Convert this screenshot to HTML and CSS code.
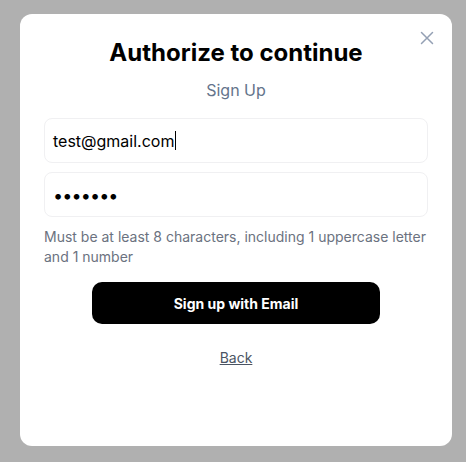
FILE: index.html
```html
<!DOCTYPE html>
<html lang="en">
<head>
<meta charset="utf-8">
<title>Authorize to continue</title>
<link rel="stylesheet" href="styles.css">
</head>
<body>
  <div class="modal">
    <button class="close" aria-label="Close">
      <svg width="16" height="16" viewBox="0 0 16 16" fill="none" stroke="#94a0b4" stroke-width="1.5" stroke-linecap="round">
        <path d="M2.5 2.5 L13.5 13.5 M13.5 2.5 L2.5 13.5"/>
      </svg>
    </button>
    <h1 class="title">Authorize to continue</h1>
    <p class="subtitle">Sign Up</p>
    <div class="fields">
      <div class="field"><span class="value">test@gmail.com</span><span class="caret"></span></div>
      <div class="field"><span class="dots">•••••••</span></div>
    </div>
    <p class="hint">Must be at least 8 characters, including 1 uppercase letter and 1 number</p>
    <button class="submit">Sign up with Email</button>
    <a class="back" href="#">Back</a>
  </div>
</body>
</html>
```
FILE: styles.css
```css
html, body {
  margin: 0;
  height: 100%;
}
body {
  background: #b0b0b0;
  font-family: Inter, "Noto Sans", sans-serif;
  padding: 14px 14px 16px 20px;
  box-sizing: border-box;
  display: flex;
}
.modal {
  position: relative;
  width: 432px;
  height: 432px;
  background: #fff;
  border-radius: 12px;
  padding: 24px 24px 0;
  box-sizing: border-box;
  display: flex;
  flex-direction: column;
}
.close {
  position: absolute;
  top: 16px;
  right: 17px;
  width: 16px;
  height: 16px;
  padding: 0;
  border: 0;
  background: none;
  display: flex;
}
.title {
  margin: 0;
  font-size: 24px;
  line-height: 30px;
  font-weight: 700;
  color: #000;
  text-align: center;
}
.subtitle {
  margin: 10px 0 0;
  font-size: 16px;
  line-height: 24px;
  color: #64748b;
  text-align: center;
}
.fields {
  margin-top: 16px;
  display: flex;
  flex-direction: column;
  gap: 9px;
}
.field {
  height: 45px;
  box-sizing: border-box;
  border: 1px solid #f0f0f2;
  border-radius: 8px;
  padding: 0 8px;
  display: flex;
  align-items: center;
  font-size: 16px;
  color: #000;
}
.caret {
  display: inline-block;
  width: 1px;
  height: 19px;
  background: #000;
  margin-left: 1px;
}
.dots {
  font-size: 18px;
  letter-spacing: -0.9px;
  margin-left: 0;
  position: relative;
  top: 1px;
}
.hint {
  margin: 10px 0 0;
  font-size: 14px;
  line-height: 20px;
  color: #6b7280;
}
.submit {
  margin: 15px auto 0;
  width: 288px;
  height: 42px;
  border: 0;
  border-radius: 10px;
  background: #000;
  color: #fff;
  font-family: Inter, "Noto Sans", sans-serif;
  font-size: 14px;
  font-weight: 700;
}
.back {
  margin: 24px auto 0;
  font-size: 14px;
  line-height: 20px;
  color: #4b5563;
  text-decoration: underline;
}
```
